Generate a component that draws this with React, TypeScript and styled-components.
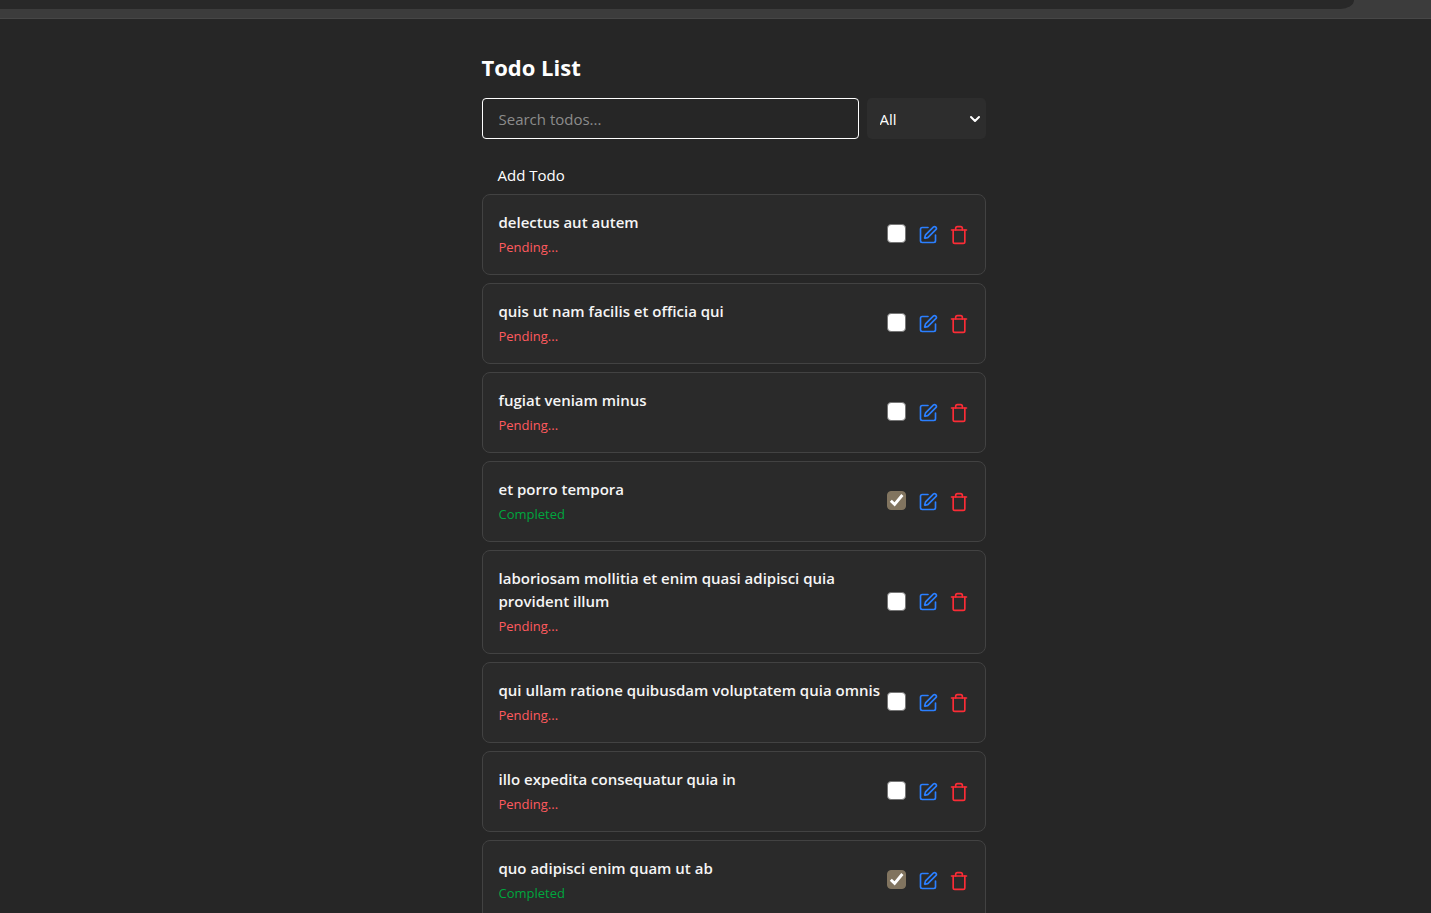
import React, { useState } from "react";
import styled, { createGlobalStyle } from "styled-components";
import { SquarePen, Trash, ChevronDown } from "lucide-react";

const GlobalStyle = createGlobalStyle`
  * { box-sizing: border-box; }
  body {
    margin: 0;
    background: #262626;
    color: #fff;
    font-family: "Segoe UI", "Open Sans", "Noto Sans", sans-serif;
    font-size: 15px;
  }
  button, input, select { font: inherit; color: inherit; }
`;

const Screen = styled.div`
  height: 100vh;
  overflow: hidden;
`;

const TopBar = styled.div`
  height: 19px;
  padding-right: 77px;
  background: #3c3c3c;
  border-bottom: 1px solid #474747;
`;

const AddressField = styled.div`
  height: 9px;
  background: #282828;
  border-bottom-right-radius: 18px 12px;
`;

const Page = styled.main`
  display: flex;
  justify-content: center;
  padding: 32px 0 0 36px;
`;

const Column = styled.div`
  width: 100%;
  max-width: 504px;
`;

const Title = styled.h1`
  margin: 0 0 15px;
  font-size: 22px;
  line-height: 32px;
  font-weight: 700;
`;

const Filters = styled.div`
  display: flex;
  gap: 8px;
`;

const SearchInput = styled.input`
  flex: 1;
  min-width: 0;
  height: 41px;
  padding: 0 16px;
  border: 1px solid #fff;
  border-radius: 4px;
  background: transparent;
  outline: none;
  &::placeholder { color: #8c8c8c; opacity: 1; }
`;

const SelectWrap = styled.div`
  display: grid;
  align-items: center;
  width: 119px;
  border-radius: 5px;
  background: #2d2d2d;
  > * { grid-area: 1 / 1; }
  > svg { justify-self: end; margin-right: 3px; pointer-events: none; }
`;

const StatusSelect = styled.select`
  width: 100%;
  height: 41px;
  padding: 0 13px;
  border: 0;
  border-radius: 5px;
  background: transparent;
  appearance: none;
  option { background: #2d2d2d; }
`;

const AddButton = styled.button`
  display: block;
  height: 38px;
  margin-top: 17px;
  padding: 0 16px;
  border: 0;
  background: transparent;
`;

const List = styled.ul`
  display: flex;
  flex-direction: column;
  gap: 8px;
  margin: 0;
  padding: 0;
  list-style: none;
`;

const Card = styled.li`
  display: flex;
  align-items: center;
  justify-content: space-between;
  gap: 6px;
  padding: 16px;
  border: 1px solid #424242;
  border-radius: 8px;
  background: #2a2a2a;
`;

const TodoText = styled.label`
  min-width: 0;
`;

const TodoTitle = styled.span`
  display: block;
  font-weight: 600;
  line-height: 23px;
  color: #f5f5f5;
`;

const Status = styled.span<{ $done: boolean }>`
  display: block;
  margin-top: 2px;
  font-size: 13px;
  line-height: 22px;
  color: ${(p) => (p.$done ? "#00a63e" : "#ff5a5f")};
`;

const Actions = styled.div`
  display: flex;
  align-items: center;
  flex-shrink: 0;
  gap: 11px;
`;

const CheckWrap = styled.span`
  display: grid;
  place-items: start;
  width: 20px;
  height: 21px;
  > * { grid-area: 1 / 1; }
  > svg { pointer-events: none; }
`;

const Checkbox = styled.input`
  appearance: none;
  width: 19px;
  height: 19px;
  margin: 0;
  border: 1px solid #767676;
  border-radius: 4px;
  background: #fff;
  &:checked { background: #81745f; border-color: #81745f; }
`;

const IconButton = styled.button<{ $color: string }>`
  display: flex;
  padding: 0;
  border: 0;
  background: transparent;
  color: ${(p) => p.$color};
`;

const initialTodos = [
  { id: 1, title: "delectus aut autem", done: false },
  { id: 2, title: "quis ut nam facilis et officia qui", done: false },
  { id: 3, title: "fugiat veniam minus", done: false },
  { id: 4, title: "et porro tempora", done: true },
  { id: 5, title: "laboriosam mollitia et enim quasi adipisci quia provident illum", done: false },
  { id: 6, title: "qui ullam ratione quibusdam voluptatem quia omnis", done: false },
  { id: 7, title: "illo expedita consequatur quia in", done: false },
  { id: 8, title: "quo adipisci enim quam ut ab", done: true },
];

export default function App() {
  const [todos, setTodos] = useState(initialTodos);
  const toggle = (id: number) =>
    setTodos((all) => all.map((t) => (t.id === id ? { ...t, done: !t.done } : t)));

  return (
    <Screen>
      <GlobalStyle />
      <TopBar><AddressField /></TopBar>
      <Page>
        <Column>
          <Title>Todo List</Title>
          <Filters>
            <SearchInput type="text" placeholder="Search todos..." aria-label="Search todos" />
            <SelectWrap>
              <StatusSelect aria-label="Filter by status" defaultValue="all">
                <option value="all">All</option>
                <option value="completed">Completed</option>
                <option value="pending">Pending</option>
              </StatusSelect>
              <ChevronDown size={16} strokeWidth={3} />
            </SelectWrap>
          </Filters>
          <AddButton type="button">Add Todo</AddButton>
          <List>
            {todos.map((t) => (
              <Card key={t.id}>
                <TodoText htmlFor={`todo-${t.id}`}>
                  <TodoTitle>{t.title}</TodoTitle>
                  <Status $done={t.done}>{t.done ? "Completed" : "Pending..."}</Status>
                </TodoText>
                <Actions>
                  <CheckWrap>
                    <Checkbox
                      id={`todo-${t.id}`}
                      type="checkbox"
                      checked={t.done}
                      onChange={() => toggle(t.id)}
                    />
                    {t.done && (
                      <svg width="19" height="19" viewBox="0 0 19 19" fill="none" stroke="#fff" strokeWidth="2.9">
                        <path d="M3.8 9.8 7.6 13.4 15.4 4" />
                      </svg>
                    )}
                  </CheckWrap>
                  <IconButton type="button" aria-label="Edit todo" $color="#2b7fff">
                    <SquarePen size={20} />
                  </IconButton>
                  <IconButton type="button" aria-label="Delete todo" $color="#fb2c36">
                    <Trash size={20} />
                  </IconButton>
                </Actions>
              </Card>
            ))}
          </List>
        </Column>
      </Page>
    </Screen>
  );
}
